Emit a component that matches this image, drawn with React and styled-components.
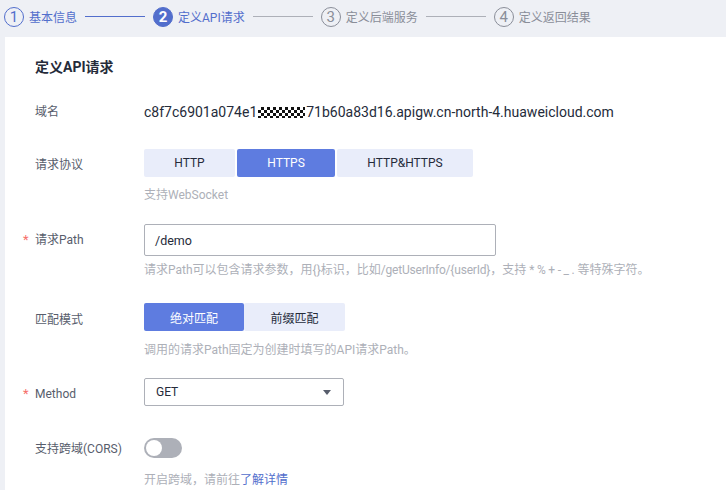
import * as React from 'react';
import styled, { createGlobalStyle } from 'styled-components';

const GlobalStyle = createGlobalStyle`
  html, body {
    margin: 0;
    padding: 0;
    background: #eef0f5;
    font-family: Roboto, "Noto Sans CJK SC", sans-serif;
  }
`;

const Page = styled.div`
  width: 726px;
  height: 490px;
  overflow: hidden;
  display: flex;
  flex-direction: column;
`;

const Steps = styled.div`
  height: 37px;
  display: flex;
  align-items: center;
  padding: 1px 0 5px 4px;
  box-sizing: border-box;
`;

const Step = styled.div`
  display: flex;
  align-items: center;
  gap: 5px;
  font-size: 12px;
  color: ${(p) => (p.state === 'todo' ? '#8a8e99' : '#526ecc')};
`;

const StepNum = styled.span`
  width: 20px;
  height: 20px;
  border-radius: 50%;
  box-sizing: border-box;
  display: flex;
  align-items: center;
  justify-content: center;
  font-size: 15px;
  border: 1px solid ${(p) => (p.state === 'todo' ? '#8a8e99' : '#526ecc')};
  background: ${(p) => (p.state === 'active' ? '#526ecc' : 'transparent')};
  color: ${(p) => (p.state === 'active' ? '#fff' : 'inherit')};
  font-weight: ${(p) => (p.state === 'active' ? 700 : 400)};
`;

const StepLine = styled.span`
  width: 60px;
  height: 1px;
  margin: 0 8px;
  background: ${(p) => (p.done ? '#526ecc' : '#adb0b8')};
`;

const Card = styled.div`
  flex: 1;
  margin-left: 5px;
  background: #fff;
  padding: 20px 0 0 30px;
`;

const Title = styled.div`
  font-size: 14px;
  line-height: 20px;
  font-weight: 700;
  color: #252b3a;
`;

const Row = styled.div`
  display: grid;
  grid-template-columns: 109px 1fr;
  margin-top: ${(p) => p.gap}px;
`;

const Label = styled.div`
  position: relative;
  font-size: 12px;
  color: #575d6c;
  line-height: ${(p) => p.h}px;
  padding-top: ${(p) => p.shift || 0}px;
`;

const Star = styled.span`
  position: absolute;
  left: -12px;
  color: #f66f6a;
  font-size: 13px;
`;

const Value = styled.div`
  font-size: 14px;
  line-height: 20px;
  color: #252b3a;
  display: flex;
  align-items: center;
`;

const Mask = styled.span`
  display: inline-block;
  width: 47px;
  height: 11px;
  background: repeating-conic-gradient(#111 0 25%, #fff 0 50%) 0 0 / 6px 6px;
  margin: 0 1px;
`;

const Segmented = styled.div`
  display: flex;
  gap: ${(p) => p.gap}px;
`;

const SegButton = styled.div`
  width: ${(p) => p.w}px;
  height: 28px;
  display: flex;
  align-items: center;
  justify-content: center;
  font-size: 12px;
  border-radius: 2px;
  background: ${(p) => (p.active ? '#5e7ce0' : '#e9edfa')};
  color: ${(p) => (p.active ? '#fff' : '#252b3a')};
`;

const Help = styled.div`
  font-size: 12px;
  line-height: 18px;
  color: #adb0b8;
  margin-top: ${(p) => p.gap}px;
`;

const Tight = styled.span`
  letter-spacing: -0.2px;
`;

const Link = styled.span`
  color: #526ecc;
`;

const Input = styled.div`
  width: 352px;
  height: 32px;
  box-sizing: border-box;
  border: 1px solid #adb0b8;
  border-radius: 2px;
  padding-left: 10px;
  display: flex;
  align-items: center;
  font-size: 12.5px;
  color: #252b3a;
`;

const Select = styled.div`
  width: 200px;
  height: 28px;
  box-sizing: border-box;
  border: 1px solid #adb0b8;
  border-radius: 2px;
  padding: 0 12px 0 11px;
  display: flex;
  align-items: center;
  justify-content: space-between;
  font-size: 12px;
  color: #252b3a;
`;

const Caret = styled.span`
  width: 0;
  height: 0;
  border-left: 4.5px solid transparent;
  border-right: 4.5px solid transparent;
  border-top: 5px solid #575d6c;
`;

const Toggle = styled.div`
  width: 38px;
  height: 20px;
  border-radius: 10px;
  background: #adb0b8;
  position: relative;
  &::after {
    content: '';
    position: absolute;
    left: 2px;
    top: 2px;
    width: 16px;
    height: 16px;
    border-radius: 50%;
    background: #fff;
  }
`;

const steps = [
  { n: 1, text: '基本信息', state: 'done' },
  { n: 2, text: '定义API请求', state: 'active' },
  { n: 3, text: '定义后端服务', state: 'todo' },
  { n: 4, text: '定义返回结果', state: 'todo' },
];

export default function App() {
  return (
    <Page>
      <GlobalStyle />
      <Steps>
        {steps.map((s, i) => (
          <React.Fragment key={s.n}>
            {i > 0 && <StepLine done={s.state !== 'todo'} />}
            <Step state={s.state}>
              <StepNum state={s.state}>{s.n}</StepNum>
              {s.text}
            </Step>
          </React.Fragment>
        ))}
      </Steps>
      <Card>
        <Title>定义API请求</Title>

        <Row gap={25}>
          <Label h={20}>域名</Label>
          <Value>
            c8f7c6901a074e1<Mask />71b60a83d16.apigw.cn-north-4.huaweicloud.com
          </Value>
        </Row>

        <Row gap={27}>
          <Label h={28} shift={2}>请求协议</Label>
          <div>
            <Segmented gap={2}>
              <SegButton w={91}>HTTP</SegButton>
              <SegButton w={98} active>HTTPS</SegButton>
              <SegButton w={136}>HTTP&amp;HTTPS</SegButton>
            </Segmented>
            <Help gap={9}>支持WebSocket</Help>
          </div>
        </Row>

        <Row gap={20}>
          <Label h={32}><Star>*</Star>请求Path</Label>
          <div>
            <Input>/demo</Input>
            <Help gap={5}>
              请求Path可以包含请求参数，用{'{}'}标识，比如<Tight>/getUserInfo/{'{userId}'}</Tight>，支持 <Tight>* % + - _ .</Tight> 等特殊字符。
            </Help>
          </div>
        </Row>

        <Row gap={24}>
          <Label h={28} shift={3}>匹配模式</Label>
          <div>
            <Segmented gap={0}>
              <SegButton w={100} active>绝对匹配</SegButton>
              <SegButton w={101}>前缀匹配</SegButton>
            </Segmented>
            <Help gap={10}>调用的请求Path固定为创建时填写的API请求Path。</Help>
          </div>
        </Row>

        <Row gap={19}>
          <Label h={28} shift={2}><Star>*</Star>Method</Label>
          <Select>
            GET
            <Caret />
          </Select>
        </Row>

        <Row gap={30}>
          <Label h={20} shift={1}>支持跨域(CORS)</Label>
          <div>
            <Toggle />
            <Help gap={13}>
              开启跨域，请前往<Link>了解详情</Link>
            </Help>
          </div>
        </Row>
      </Card>
    </Page>
  );
}
